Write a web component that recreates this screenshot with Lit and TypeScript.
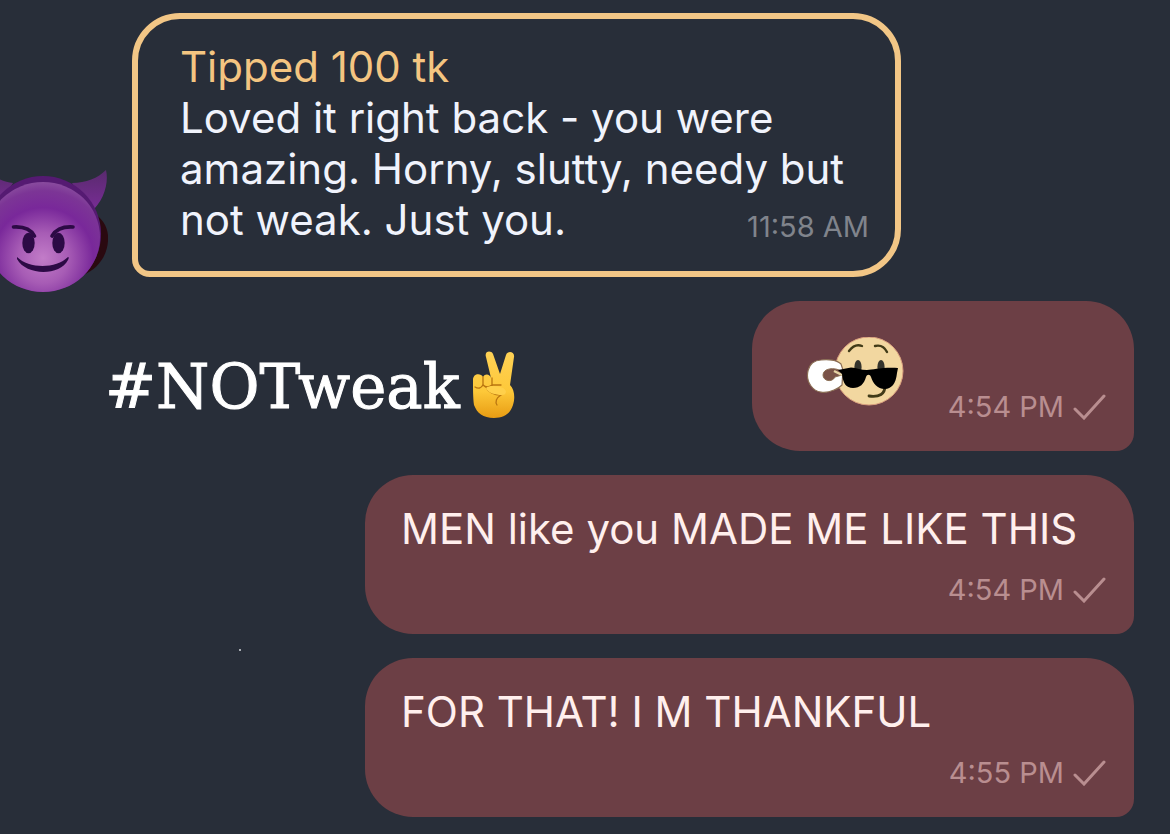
import { LitElement, html, css, svg } from "lit";
import { customElement, property } from "lit/decorators.js";

const devil = svg`
  <defs>
    <radialGradient id="skin" gradientUnits="userSpaceOnUse" cx="43" cy="258" r="84">
      <stop offset="0" stop-color="#c27cc8"/>
      <stop offset="0.3" stop-color="#a75cb5"/>
      <stop offset="0.6" stop-color="#79289a"/>
      <stop offset="0.8" stop-color="#7c3596"/>
      <stop offset="1" stop-color="#9560a6"/>
    </radialGradient>
    <linearGradient id="horn" x1="0" y1="0" x2="0" y2="1">
      <stop offset="0" stop-color="#592a6e"/>
      <stop offset="1" stop-color="#7b2d98"/>
    </linearGradient>
  </defs>
  <path d="M92 212C104 219 109 229 108 241C107 256 98 269 83 275Z" fill="#2a0910"/>
  <path d="M72 183C86 183 98 178 106 170C109 183 104 201 90 213Z" fill="url(#horn)"/>
  <path d="M13 183C4 182 -5 178 -12 172V208L0 202Z" fill="url(#horn)"/>
  <circle cx="43" cy="234" r="58" fill="#551a72"/>
  <ellipse cx="43" cy="237" rx="57" ry="55" fill="url(#skin)"/>
  <g fill="#2c0a45">
    <ellipse cx="28.500" cy="243" rx="6.200" ry="10.300"/>
    <ellipse cx="58.500" cy="243" rx="6.200" ry="10.300"/>
    <path d="M17 257C29 269 56 269 68 257C69 257 69 258 68 260C60 276 26 276 17 259Z"/>
  </g>
  <g fill="none" stroke="#2c0a45" stroke-width="3.600" stroke-linecap="round">
    <path d="M13.500 227Q29 226 34.500 236"/>
    <path d="M73 227Q58 226 52 236"/>
  </g>`;

const peace = svg`
  <defs>
    <linearGradient id="hand" x1="0" y1="0" x2="0" y2="1">
      <stop offset="0" stop-color="#ffd256"/>
      <stop offset="0.6" stop-color="#fdc839"/>
      <stop offset="1" stop-color="#e89c13"/>
    </linearGradient>
  </defs>
  <path d="M14 6C12 0 19-1 21 3L28 23L34 4C36-1 43 1 42 6L38 34C43 39 43 48 41 54C38 63 32 67 22 67C11 67 5 62 2 54C1 47 1 37 1 29C1 22 9 22 11 26C13 22 18 23 19 27Z" fill="url(#hand)"/>
  <g fill="none" stroke="#b97510" stroke-width="1.300" stroke-linecap="round">
    <path d="M11 26V34Q8 39 3 36"/>
    <path d="M20 27V35M11 34Q15 38 20 34H29"/>
    <path d="M14 36C16 41 22 44 29 44C24 47 23 51 25 54"/>
  </g>
  <path d="M14 37C17 34 27 35 31 37C35 39 35 44 30 44C23 44 16 42 14 37Z" fill="#ffd04b"/>`;

const cool = svg`
  <circle cx="63" cy="34" r="34" fill="#f2d7a0" stroke="#d99f7e" stroke-width="1"/>
  <g fill="none" stroke="#413b18" stroke-width="2.400" stroke-linecap="round">
    <path d="M43 14Q49 6 56 9"/>
    <path d="M69 9Q77 7 81 15"/>
    <path d="M63 59Q79 61 79 49" stroke-width="2.800"/>
  </g>
  <ellipse cx="52" cy="30" rx="3.600" ry="7" fill="#34332c"/>
  <ellipse cx="75" cy="30" rx="3.600" ry="7" fill="#34332c"/>
  <path d="M15 23C22 22 31 23 35 27L37 33L36 48C33 51 31 52 28 53C19 57 10 56 5 49C-1 41 0 24 15 23Z" fill="#fff" stroke="#8b6f55" stroke-width="1.200"/>
  <path d="M35 34C29 30 17 31 17 38C17 44 26 46 29 40L36 38Z" fill="#7a5248" stroke="#8b6f55" stroke-width="1"/>
  <path d="M28 34L36 38" stroke="#e6d3a5" stroke-width="2.400"/>
  <path d="M32 33L45 30.500C51 31 55 33 61 33C67 33 76 30 92 31L91 36C90 47 85 52 79 52C71 52 67 46 65 40C64 37 61 37 60 40C58 47 54 51 47 51C40 51 37 46 36 37Z" fill="#000"/>`;

@customElement("message-time")
export class MessageTime extends LitElement {
  @property() value = "";
  @property({ type: Boolean }) sent = false;

  static styles = css`
    :host {
      display: inline-flex;
      align-items: center;
      gap: 9px;
      font-size: 29px;
      line-height: 36px;
      white-space: nowrap;
    }
    .check {
      width: 33px;
      height: 26px;
      fill: none;
      stroke: currentColor;
      stroke-width: 3;
      stroke-linecap: round;
    }
  `;

  render() {
    return html`<time>${this.value}</time>${this.sent
        ? html`<svg class="check" viewBox="0 0 33 26" role="img" aria-label="Sent">
            <path d="M2 15L11 24L31 2" />
          </svg>`
        : null}`;
  }
}

@customElement("app-root")
export class AppRoot extends LitElement {
  static styles = css`
    :host {
      display: block;
      font-family: Inter, "Liberation Sans", sans-serif;
      font-size: 42px;
      line-height: 51px;
      color: #f0f3fc;
      background: #282e39;
    }
    .chat {
      box-sizing: border-box;
      min-height: 100vh;
      padding: 13px 36px 17px 0;
      display: flex;
      flex-direction: column;
      gap: 24px;
      overflow: hidden;
    }
    .row {
      display: flex;
      justify-content: flex-end;
      position: relative;
    }
    .received {
      justify-content: flex-start;
      align-items: flex-end;
      gap: 24px;
    }
    .avatar {
      flex: none;
      width: 108px;
      height: 122px;
      margin-bottom: -15px;
    }
    .bubble,
    .tip {
      box-sizing: border-box;
      width: 100%;
      max-width: 769px;
    }
    .tip {
      border: 6px solid #f2c686;
      border-radius: 48px 48px 48px 18px;
      padding: 22px 26px 26px 42px;
    }
    p {
      margin: 0;
    }
    .amount {
      color: #f4c581;
    }
    .tip message-time {
      float: right;
      margin-top: 15px;
      color: #80848c;
    }
    .bubble {
      display: flex;
      flex-direction: column;
      gap: 18px;
      padding: 28px 28px 26px 36px;
      border-radius: 48px 48px 18px 48px;
      background: #6c3f45;
      color: #ffefed;
    }
    .bubble message-time {
      align-self: flex-end;
      color: #b98e90;
    }
    .sticker {
      flex-direction: row;
      width: auto;
      gap: 44px;
      padding: 36px 28px 26px 54px;
    }
    .cool {
      width: 98px;
      height: 70px;
      margin-bottom: 18px;
    }
    .tagged {
      justify-content: space-between;
      align-items: center;
    }
    .tag {
      display: flex;
      align-items: center;
      gap: 12px;
      margin-left: 105px;
      padding-top: 18px;
      font-family: "DejaVu Serif", serif;
      font-size: 61px;
      line-height: 68px;
      color: #fff;
      -webkit-text-stroke: 1px #fff;
    }
    .tag span {
      padding-top: 4px;
    }
    .peace {
      width: 44px;
      height: 68px;
    }
    .speck {
      position: absolute;
      left: 239px;
      bottom: -17px;
      width: 2px;
      height: 2px;
      border-radius: 1px;
      background: #d5d8dd;
    }
  `;

  render() {
    return html`
      <main class="chat">
        <div class="row received">
          <svg class="avatar" viewBox="0 170 108 122" role="img" aria-label="Smiling devil">${devil}</svg>
          <article class="tip">
            <p class="amount">Tipped 100 tk</p>
            <p>
              <span>Loved it right back - you were amazing. Horny, slutty, needy but</span>
              <span>not weak. Just you.</span>
              <message-time value="11:58 AM"></message-time>
            </p>
          </article>
        </div>
        <div class="row tagged">
          <div class="tag">
            <span>#NOTweak</span>
            <svg class="peace" viewBox="0 0 44 68" role="img" aria-label="Victory hand">${peace}</svg>
          </div>
          <article class="bubble sticker">
            <svg class="cool" viewBox="0 0 98 70" role="img" aria-label="Smirking face with sunglasses">${cool}</svg>
            <message-time value="4:54 PM" sent></message-time>
          </article>
        </div>
        <div class="row">
          <article class="bubble">
            <p>MEN like you MADE ME LIKE THIS</p>
            <message-time value="4:54 PM" sent></message-time>
          </article>
          <span class="speck"></span>
        </div>
        <div class="row">
          <article class="bubble">
            <p>FOR THAT! I M THANKFUL</p>
            <message-time value="4:55 PM" sent></message-time>
          </article>
        </div>
      </main>
    `;
  }
}
